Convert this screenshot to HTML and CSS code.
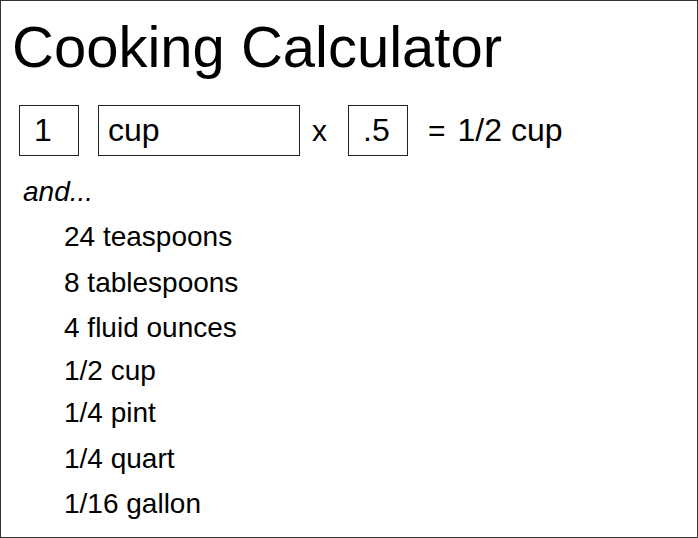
FILE: index.html
```html
<!DOCTYPE html>
<html>
<head>
<meta charset="utf-8">
<title>Cooking Calculator</title>
<link rel="stylesheet" href="styles.css">
</head>
<body>
<div class="page">
  <h1 class="title">Cooking Calculator</h1>
  <div class="calc-row">
    <input class="field field-num" type="text" value="1">
    <input class="field field-unit" type="text" value="cup">
    <span class="op op-times">x</span>
    <input class="field field-num" type="text" value=".5">
    <span class="op op-eq">=</span>
    <span class="result">1/2 cup</span>
  </div>
  <p class="and">and...</p>
  <ul class="conversions">
    <li class="conv">24 teaspoons</li>
    <li class="conv conv-b">8 tablespoons</li>
    <li class="conv">4 fluid ounces</li>
    <li class="conv conv-d">1/2 cup</li>
    <li class="conv conv-e">1/4 pint</li>
    <li class="conv conv-f">1/4 quart</li>
    <li class="conv">1/16 gallon</li>
  </ul>
</div>
</body>
</html>
```
FILE: styles.css
```css
html, body {
  margin: 0;
  padding: 0;
  background: #fff;
}
body {
  font-family: "Liberation Sans", Arial, sans-serif;
  color: #000;
}
.page {
  box-sizing: border-box;
  width: 698px;
  height: 538px;
  border: 1px solid #333;
  padding: 11px 0 0 11px;
  overflow: hidden;
}
.title {
  margin: 0;
  font-weight: normal;
  font-size: 58px;
  line-height: 70px;
}
.calc-row {
  display: flex;
  align-items: center;
  margin: 23px 0 0 7px;
  height: 51px;
  font-size: 30px;
}
.field {
  box-sizing: border-box;
  height: 51px;
  margin: 0;
  border: 1px solid #222;
  border-radius: 0;
  padding: 0 0 0 14px;
  font-family: inherit;
  font-size: 32px;
  color: #000;
  background: #fff;
  outline: none;
}
.field-num {
  width: 60px;
}
.field-unit {
  width: 202px;
  margin-left: 19px;
  padding-left: 9px;
}
.op-times {
  margin: 0 21px 0 12px;
}
.op-eq {
  margin: 0 12px 0 20px;
}
.result {
  font-size: 32px;
}
.and {
  margin: 20px 0 0 11px;
  font-style: italic;
  font-size: 28px;
  line-height: 32px;
}
.conversions {
  list-style: none;
  margin: 6px 0 0 52px;
  padding: 0;
  font-size: 28px;
  line-height: 45px;
}
.conv-b {
  margin-top: 1px;
}
.conv-d {
  margin-top: -2px;
}
.conv-e {
  margin-top: -3px;
}
.conv-f {
  margin-top: 1px;
}
```
